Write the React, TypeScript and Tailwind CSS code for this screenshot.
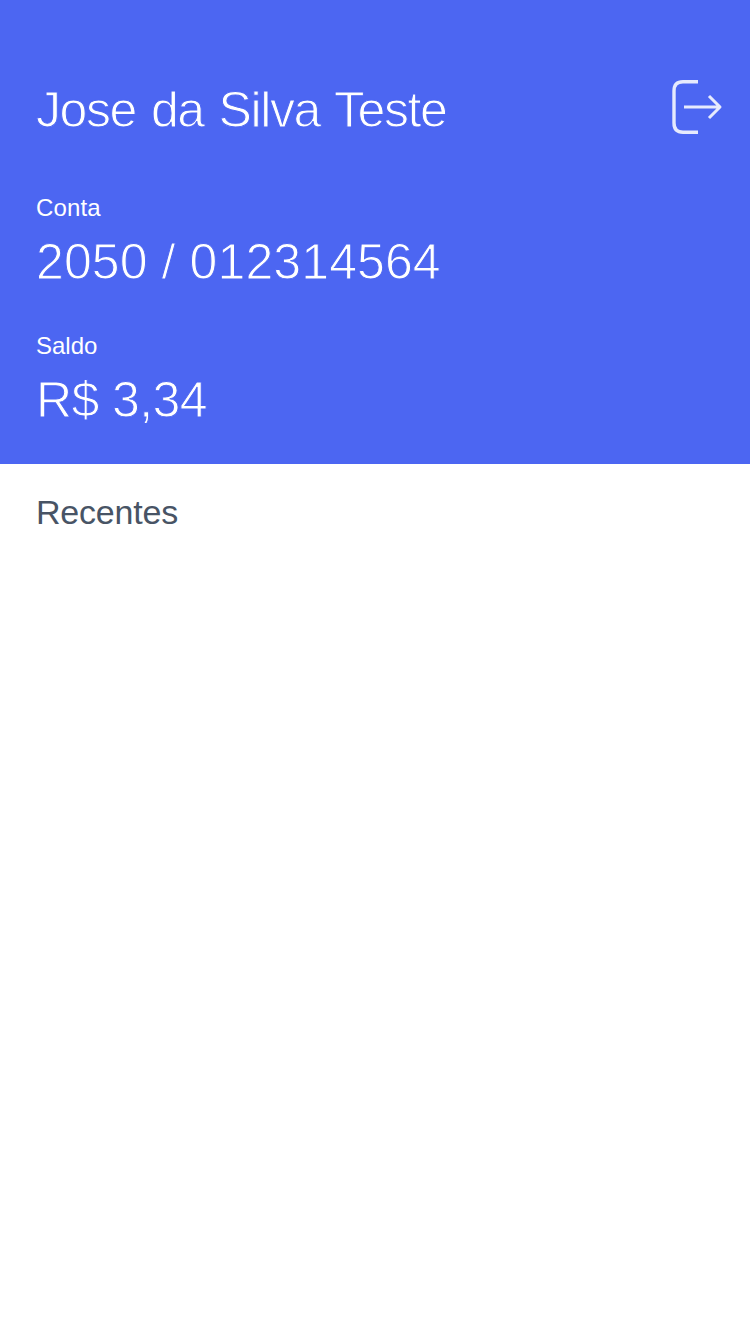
const valueText =
  "text-[50px] leading-[60px] font-normal [-webkit-text-stroke:1px_#4c66f2]";

export default function App() {
  return (
    <main className="flex h-[1334px] w-[750px] flex-col bg-white font-['Liberation_Sans',Arial,sans-serif]">
      <header className="flex h-[464px] flex-col bg-[#4c66f2] pl-9 text-white">
        <div className="flex items-start justify-between pt-[79px] pr-[27px]">
          <h1 className={`${valueText} pt-px tracking-[-1.4px] [word-spacing:2.4px]`}>Jose da Silva Teste</h1>
          <button aria-label="Sair">
            <svg width="52" height="56" viewBox="0 0 52 56" fill="none" stroke="#e6eafd" strokeWidth="3.4" strokeLinejoin="round">
              <path d="M27 2.8H12Q3 2.8 3 12V44Q3 53.2 12 53.2H27" />
              <path d="M13 28H49M38 17L49 28L38 39" strokeWidth="3" />
            </svg>
          </button>
        </div>
        <div className="pt-[54px] text-[24px] leading-[28px] tracking-[0.15px]">Conta</div>
        <div className={`${valueText} pt-[10px] tracking-[0.1px]`}>2050 / 012314564</div>
        <div className="pt-[40px] text-[24px] leading-[28px]">Saldo</div>
        <div className={`${valueText} pt-[10px] tracking-[-0.6px]`}>R$ 3,34</div>
      </header>
      <section className="px-9 pt-[27px]">
        <h2 className="text-[34px] leading-[42px] tracking-[-0.2px] text-[#485465]">Recentes</h2>
      </section>
    </main>
  );
}
